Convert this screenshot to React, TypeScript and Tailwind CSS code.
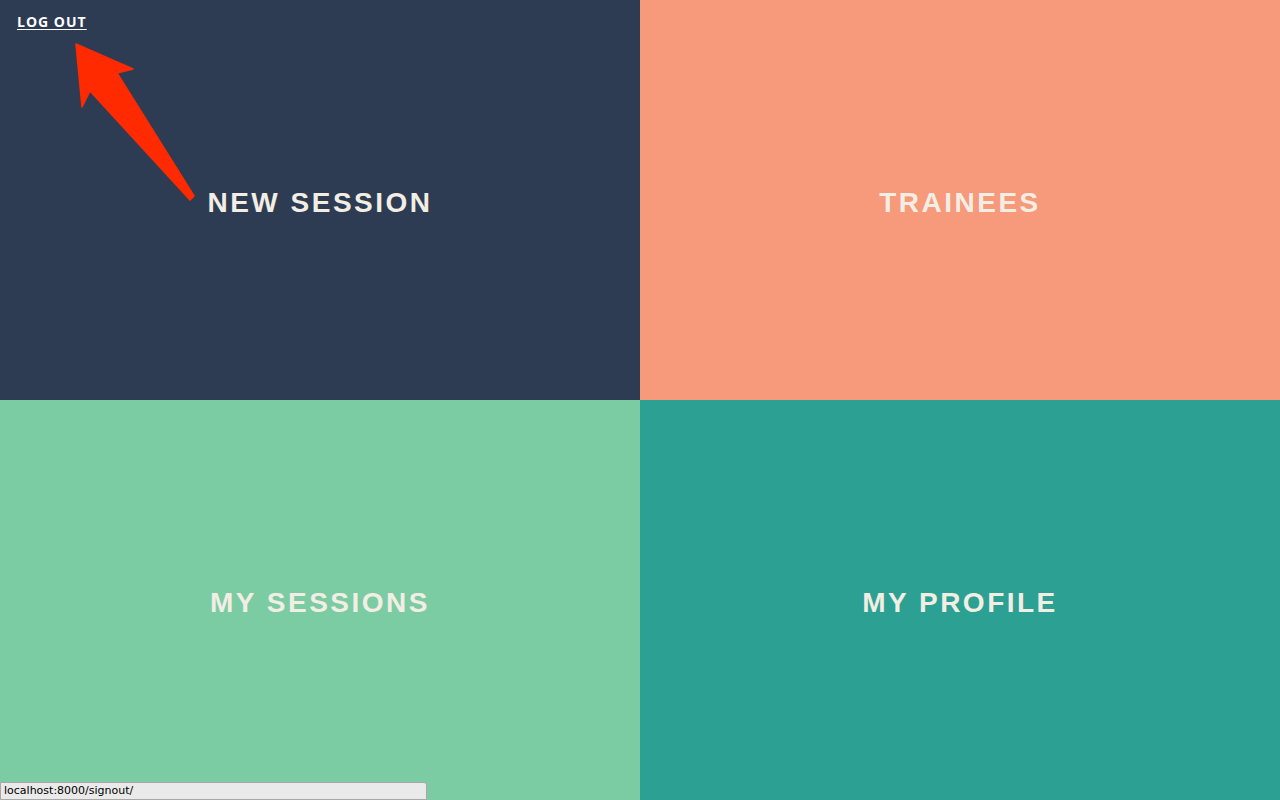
import React from "react";

const label =
  "pt-[6px] text-[28px] font-bold tracking-[2.5px] text-[#f2eee4] [font-family:'Liberation_Sans',Arial,sans-serif]";

export default function App() {
  return (
    <div className="relative w-[1280px] h-[800px] overflow-hidden grid grid-cols-2 grid-rows-2">
      <div className="bg-[#2e3c53] flex items-center justify-center">
        <span className={label}>NEW SESSION</span>
      </div>
      <div className="bg-[#f7997b] flex items-center justify-center">
        <span className={label}>TRAINEES</span>
      </div>
      <div className="bg-[#7bcba3] flex items-center justify-center">
        <span className={label}>MY SESSIONS</span>
      </div>
      <div className="bg-[#2ba093] flex items-center justify-center">
        <span className={label}>MY PROFILE</span>
      </div>

      <a
        href="#"
        className="absolute left-[17px] top-[11px] text-[14px] font-bold tracking-[1px] text-white underline underline-offset-[2px] [font-family:'Open_Sans',sans-serif]"
      >
        LOG OUT
      </a>

      <svg className="absolute left-0 top-0" width="220" height="220" viewBox="0 0 220 220">
        <polygon
          points="76,44 133,69 117,73 194,196 190,200 90,91 82,107"
          fill="#ff2a00"
          stroke="#ff2a00"
          strokeWidth="1.5"
          strokeLinejoin="round"
        />
      </svg>

      <div className="absolute left-0 bottom-0 w-[427px] h-[18px] bg-[#eaeaea] border border-[#a8a8a8] rounded-tr-[3px] flex items-center pl-[3px] text-[11px] text-black [font-family:'DejaVu_Sans',sans-serif]">
        localhost:8000/signout/
      </div>
    </div>
  );
}
